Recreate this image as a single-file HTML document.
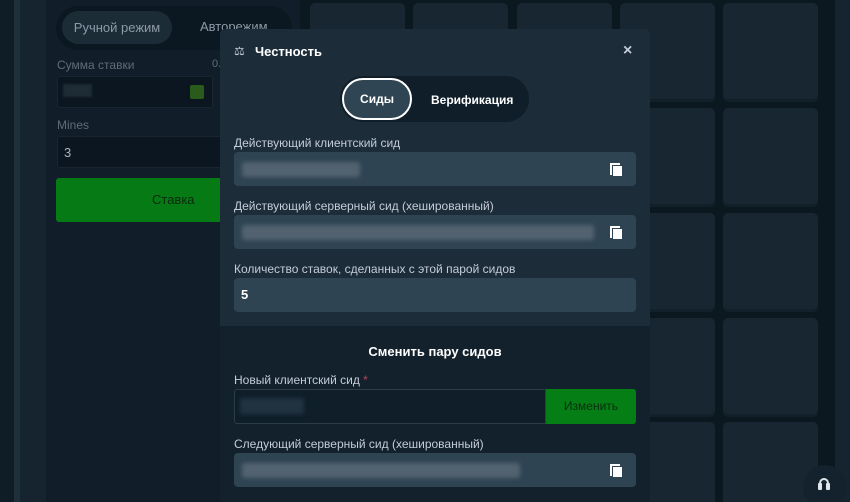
<!DOCTYPE html>
<html><head><meta charset="utf-8"><style>
*{margin:0;padding:0;box-sizing:border-box}
html,body{width:850px;height:502px;overflow:hidden}
body{background:#0f1c26;font-family:"Liberation Sans","Noto Sans CJK SC",sans-serif;position:relative;color:#b1bad3}
.a{position:absolute}
.tile{position:absolute;width:95px;height:96px;background:#172630;border-radius:5px;box-shadow:0 3px 0 #122029}
.lbl{position:absolute;left:14px;font-size:12px;color:#c4ccd8}
.inp{position:absolute;left:14px;width:402px;height:34px;background:#2f4453;border-radius:4px}
.blur{position:absolute;height:15px;top:10px;left:8px;background:#52636f;border-radius:3px;filter:blur(2px)}
.cp{position:absolute;right:14px;top:11px;width:12px;height:13px}
.cp:before{content:"";position:absolute;left:0;top:0;width:8px;height:10px;border-left:2px solid #fff;border-top:2px solid #fff}
.cp:after{content:"";position:absolute;left:3px;top:3px;width:9px;height:10px;background:#fff}
</style></head><body>
<div class="a" style="left:0;top:0;width:14px;height:502px;background:#0f1d27"></div>
<div class="a" style="left:14px;top:0;width:6px;height:502px;background:#1d303c"></div>
<div class="a" style="left:20px;top:0;width:26px;height:502px;background:#15242e"></div>
<div class="a" style="left:46px;top:0;width:254px;height:502px;background:#111e29"></div>
<div class="a" style="left:300px;top:0;width:535px;height:502px;background:#0b1820"></div>
<div class="a" style="left:835px;top:0;width:15px;height:502px;background:#15242e"></div>
<!-- sidebar -->
<div class="a" style="left:56px;top:6px;width:236px;height:44px;background:#0c1821;border-radius:22px"></div>
<div class="a" style="left:62px;top:11px;width:110px;height:33px;background:#1c2c37;border-radius:17px;font-size:13px;color:#8d99a6;text-align:center;line-height:33px">Ручной режим</div>
<div class="a" style="left:200px;top:19px;font-size:13px;color:#8d99a6">Авторежим</div>
<div class="a" style="left:57px;top:58px;font-size:12px;color:#5f6d79">Сумма ставки</div>
<div class="a" style="left:212px;top:58px;font-size:11px;color:#5f6d79">0.</div>
<div class="a" style="left:57px;top:76px;width:156px;height:32px;background:#0b1620;border:1px solid #17262f;border-radius:3px"></div>
<div class="a" style="left:63px;top:84px;width:29px;height:13px;background:#1e2c36;filter:blur(1px)"></div>
<div class="a" style="left:190px;top:85px;width:14px;height:14px;background:#2a5a1c;border-radius:2px"></div>
<div class="a" style="left:57px;top:118px;font-size:12px;color:#5f6d79">Mines</div>
<div class="a" style="left:57px;top:136px;width:166px;height:32px;background:#0b1620;border:1px solid #17262f;border-radius:3px;color:#aab4be;font-size:13px;padding:8px 6px">3</div>
<div class="a" style="left:56px;top:178px;width:170px;height:44px;background:#067a14;border-radius:3px;color:#0a2b10;font-size:13px;line-height:44px;padding-left:96px">Ставка</div>
<!-- tiles -->
<div class="tile" style="left:310px;top:3px"></div><div class="tile" style="left:413px;top:3px"></div><div class="tile" style="left:517px;top:3px"></div><div class="tile" style="left:620px;top:3px"></div><div class="tile" style="left:723px;top:3px"></div>
<div class="tile" style="left:310px;top:108px"></div><div class="tile" style="left:413px;top:108px"></div><div class="tile" style="left:517px;top:108px"></div><div class="tile" style="left:620px;top:108px"></div><div class="tile" style="left:723px;top:108px"></div>
<div class="tile" style="left:310px;top:213px"></div><div class="tile" style="left:413px;top:213px"></div><div class="tile" style="left:517px;top:213px"></div><div class="tile" style="left:620px;top:213px"></div><div class="tile" style="left:723px;top:213px"></div>
<div class="tile" style="left:310px;top:318px"></div><div class="tile" style="left:413px;top:318px"></div><div class="tile" style="left:517px;top:318px"></div><div class="tile" style="left:620px;top:318px"></div><div class="tile" style="left:723px;top:318px"></div>
<div class="tile" style="left:310px;top:422px;height:90px"></div><div class="tile" style="left:413px;top:422px;height:90px"></div><div class="tile" style="left:517px;top:422px;height:90px"></div><div class="tile" style="left:620px;top:422px;height:90px"></div><div class="tile" style="left:723px;top:422px;height:90px"></div>
<div class="a" style="left:803px;top:465px;width:44px;height:44px;border-radius:22px;background:#13222c"></div>
<div class="a" style="left:819px;top:478px;width:10px;height:12px;border:2px solid #dfe5ea;border-bottom:none;border-radius:6px 6px 0 0"></div>
<div class="a" style="left:818px;top:483px;width:4px;height:7px;background:#dfe5ea;border-radius:1px"></div>
<div class="a" style="left:826px;top:483px;width:4px;height:7px;background:#dfe5ea;border-radius:1px"></div>
<!-- modal -->
<div class="a" style="left:220px;top:29px;width:430px;height:473px;background:#1c2c38;border-radius:5px 5px 0 0;overflow:hidden">
 <div class="a" style="left:14px;top:15px;font-size:12px;color:#c4ccd8">⚖</div>
 <div class="a" style="left:35px;top:15px;font-size:13px;font-weight:bold;color:#fff">Честность</div>
 <div class="a" style="left:403px;top:13px;font-size:16px;font-weight:bold;color:#c4ccd8">×</div>
 <div class="a" style="left:120px;top:47px;width:189px;height:46px;background:#0f1e29;border-radius:23px"></div>
 <div class="a" style="left:122px;top:49px;width:70px;height:42px;background:#2f4553;border:2px solid #fff;border-radius:21px;color:#fff;font-size:12px;font-weight:bold;text-align:center;line-height:38px">Сиды</div>
 <div class="a" style="left:211px;top:64px;font-size:12px;font-weight:bold;color:#fff">Верификация</div>
 <div class="lbl" style="top:107px">Действующий клиентский сид</div>
 <div class="inp" style="top:123px"><div class="blur" style="width:118px"></div><div class="cp"></div></div>
 <div class="lbl" style="top:170px">Действующий серверный сид (хешированный)</div>
 <div class="inp" style="top:186px"><div class="blur" style="width:352px"></div><div class="cp"></div></div>
 <div class="lbl" style="top:233px">Количество ставок, сделанных с этой парой сидов</div>
 <div class="inp" style="top:249px;color:#fff;font-size:13px;font-weight:bold;padding:9px 7px">5</div>
 <div class="a" style="left:0;top:297px;width:430px;height:180px;background:#13212c"></div>
 <div class="a" style="left:0;top:315px;width:430px;text-align:center;font-size:13px;font-weight:bold;color:#fff">Сменить пару сидов</div>
 <div class="lbl" style="top:344px">Новый клиентский сид <span style="color:#c0405a">*</span></div>
 <div class="a" style="left:14px;top:360px;width:312px;height:35px;background:#0f1e29;border:1px solid #2b3d49;border-radius:3px 0 0 3px"><div class="a" style="left:5px;top:8px;width:64px;height:16px;background:#213340;filter:blur(2px)"></div></div>
 <div class="a" style="left:326px;top:360px;width:90px;height:35px;background:#067e16;border-radius:0 3px 3px 0;color:#0b2e10;font-size:12px;text-align:center;line-height:35px">Изменить</div>
 <div class="lbl" style="top:408px">Следующий серверный сид (хешированный)</div>
 <div class="inp" style="top:424px"><div class="blur" style="width:278px"></div><div class="cp"></div></div>
</div>
</body></html>
